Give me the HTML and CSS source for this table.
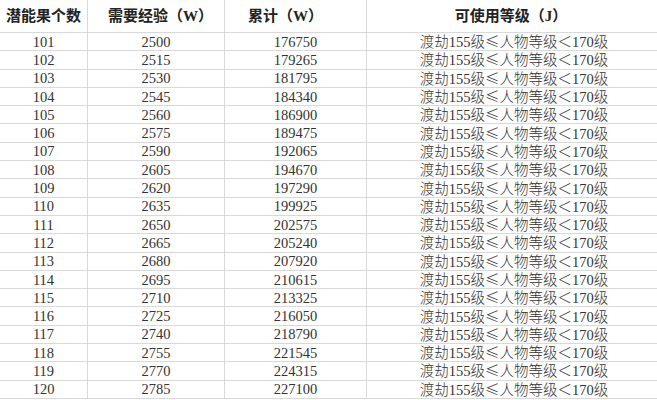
FILE: index.html
```html
<!DOCTYPE html>
<html lang="zh-CN">
<head>
<meta charset="utf-8">
<link rel="stylesheet" href="styles.css">
</head>
<body>
<div class="sheet">
  <div class="row head">
    <div class="c c1">潜能果个数</div>
    <div class="c c2">需要经验<span class="p">（<b class="w">W</b>）</span></div>
    <div class="c c3">累计<span class="p">（<b class="w">W</b>）</span></div>
    <div class="c c4">可使用等级<span class="p">（<b class="w">J</b>）</span></div>
  </div>
  <div id="rows"></div>
</div>
<script src="script.js"></script>
</body>
</html>
```
FILE: script.js
```js
var exp = [2500,2515,2530,2545,2560,2575,2590,2605,2620,2635,2650,2665,2680,2695,2710,2725,2740,2755,2770,2785];
var sum = [176750,179265,181795,184340,186900,189475,192065,194670,197290,199925,202575,205240,207920,210615,213325,216050,218790,221545,224315,227100];
var html = '';
for (var i = 0; i < 20; i++) {
  html += '<div class="row">' +
    '<div class="c c1">' + (101 + i) + '</div>' +
    '<div class="c c2">' + exp[i] + '</div>' +
    '<div class="c c3">' + sum[i] + '</div>' +
    '<div class="c c4"><span class="t"><span class="cj">渡劫</span>155<span class="cj">级≤人物等级＜</span>170<span class="cj">级</span></span></div>' +
    '</div>';
}
document.getElementById('rows').innerHTML = html;
```
FILE: styles.css
```css
html, body {
  margin: 0;
  padding: 0;
  background: #ffffff;
}
.sheet {
  width: 657px;
  height: 400px;
  overflow: hidden;
  font-family: "Liberation Serif", "Noto Sans CJK SC", serif;
  color: #333333;
}
.row {
  display: grid;
  grid-template-columns: 88px 137px 142px 290px;
  height: 18.3px;
}
.c {
  box-sizing: border-box;
  border-bottom: 1px solid #d9d9d9;
  border-right: 1px solid #d9d9d9;
  display: flex;
  align-items: center;
  justify-content: center;
  font-size: 14.5px;
  line-height: 16px;
  white-space: nowrap;
}
.c4 {
  border-right: none;
  padding-left: 4px;
}
.t {
  line-height: 16px;
}
.cj {
  font-family: "Noto Sans CJK SC", sans-serif;
  font-weight: 300;
  line-height: 16px;
}
.head {
  height: 33px;
}
.head .c {
  font-family: "Noto Sans CJK SC", sans-serif;
  font-weight: 700;
  font-size: 15px;
  line-height: 20px;
  color: #222222;
  padding-bottom: 2px;
}
.head .c1 {
  justify-content: flex-start;
  padding-left: 6px;
}
.head .c2 {
  justify-content: flex-start;
  padding-left: 20px;
}
.head .c3 {
  justify-content: flex-end;
  padding-right: 43px;
}
.head .c4 {
  padding-left: 0;
  padding-right: 2px;
}
.p {
  font-weight: 700;
}
.w {
  font-family: "Liberation Serif", serif;
  font-weight: 700;
}
```
